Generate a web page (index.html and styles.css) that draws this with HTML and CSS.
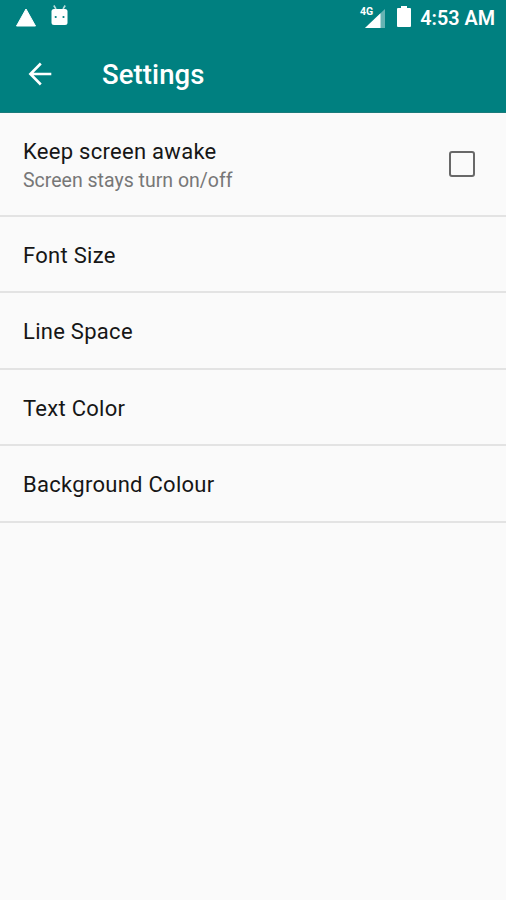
FILE: index.html
```html
<!DOCTYPE html>
<html lang="en">
<head>
<meta charset="utf-8">
<title>Settings</title>
<link rel="stylesheet" href="styles.css">
</head>
<body>
<header class="header">
  <div class="status">
    <svg class="notices" width="80" height="36" viewBox="0 0 80 36">
      <path d="M26 9 L35.5 26 H16.5 Z" fill="#fff" stroke="#fff" stroke-width="1" stroke-linejoin="round"/>
      <path d="M53.8 5.5 L56 9 M65.2 5.5 L63 9" stroke="#b9dcdc" stroke-width="1.6"/>
      <path d="M54 9 H65 Q67.5 9 67.5 11.5 V22.5 Q67.5 25 65 25 H54 Q51.5 25 51.5 22.5 V11.5 Q51.5 9 54 9 Z" fill="#fff"/>
      <circle cx="55.7" cy="17" r="1.1" fill="#008080"/>
      <circle cx="63.5" cy="17" r="1.1" fill="#008080"/>
    </svg>
    <div class="system">
      <span class="network">4G</span>
      <svg class="signal" width="21" height="20" viewBox="0 0 21 20">
        <path d="M0 20 L20 1 V20 Z" fill="#66b3b3"/>
        <path d="M0 20 L15.5 5.3 V20 Z" fill="#fff"/>
      </svg>
      <svg class="battery" width="14" height="22" viewBox="0 0 14 22">
        <path d="M4 0 H10 V2 H13 Q14 2 14 3 V20 Q14 21 13 21 H1 Q0 21 0 20 V3 Q0 2 1 2 H4 Z" fill="#fff"/>
      </svg>
      <span class="clock">4:53 AM</span>
    </div>
  </div>
  <div class="toolbar">
    <svg class="back" width="24" height="24" viewBox="0 0 24 24">
      <path d="M23.3 12 H2.5 M12.8 1.5 L2.4 12 L12.8 22.5" fill="none" stroke="#fff" stroke-width="2.6"/>
    </svg>
    <h1 class="title">Settings</h1>
  </div>
</header>
<main class="list">
  <label class="row row-tall">
    <span class="copy"><span class="name">Keep screen awake</span><span class="summary">Screen stays turn on/off</span></span>
    <input class="check" type="checkbox">
  </label>
  <div class="row"><span class="name">Font Size</span></div>
  <div class="row"><span class="name">Line Space</span></div>
  <div class="row"><span class="name">Text Color</span></div>
  <div class="row"><span class="name">Background Colour</span></div>
</main>
</body>
</html>
```
FILE: styles.css
```css
* { box-sizing: border-box; }
body {
  margin: 0;
  min-height: 900px;
  background: #fafafa;
  color: #161616;
  font-family: Roboto, "Liberation Sans", sans-serif;
}
.header {
  height: 113px;
  background: #008080;
  border-bottom: 1px solid #1a7b7b;
  color: #fff;
}
.status {
  display: flex;
  justify-content: space-between;
  height: 36px;
}
.system {
  display: flex;
  align-items: flex-start;
  padding-right: 11px;
}
.network {
  margin: 6px -8px 0 0;
  font-size: 10.5px;
  line-height: 12px;
  font-weight: 700;
}
.signal { margin: 8px 11px 0 0; }
.battery { margin: 6px 9px 0 0; }
.clock {
  font-size: 19.8px;
  line-height: 24px;
  font-weight: 600;
  margin-top: 7px;
}
.toolbar {
  display: flex;
  align-items: center;
  height: 76px;
  padding-left: 28px;
}
.back { margin-bottom: 1px; }
.title {
  margin: 2px 0 0 50px;
  font-size: 27.5px;
  line-height: 32px;
  font-weight: 500;
  letter-spacing: 0.1px;
}
.row {
  display: flex;
  align-items: center;
  justify-content: space-between;
  height: 76.5px;
  padding: 4px 31px 0 23px;
  border-bottom: 2px solid #e3e3e3;
}
.row-tall {
  height: 103.5px;
  padding-top: 0;
}
.copy {
  display: flex;
  flex-direction: column;
  padding-top: 3px;
}
.name {
  font-size: 22px;
  line-height: 30px;
  letter-spacing: 0.28px;
}
.summary {
  font-size: 19.5px;
  line-height: 27px;
  color: #777;
}
.check {
  appearance: none;
  width: 26px;
  height: 26px;
  margin: 0;
  border: 2px solid #686868;
  border-radius: 3px;
}
```
